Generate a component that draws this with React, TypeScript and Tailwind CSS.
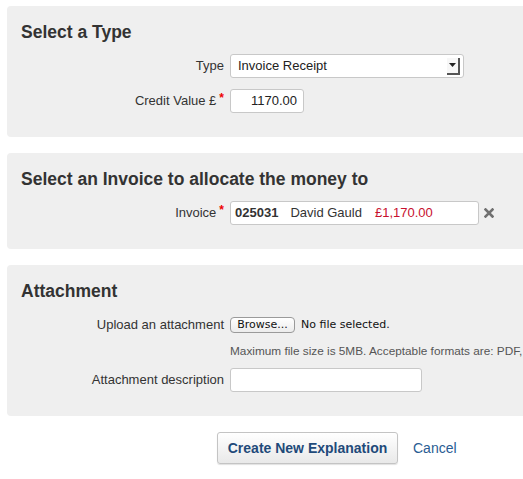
import React from "react";

const Req = () => <span className="text-[#e00] font-bold ml-[3px] relative -top-[3px] text-[12px]">*</span>;

function Row({ label, req, children, className = "" }: { label: string; req?: boolean; children: React.ReactNode; className?: string }) {
  return (
    <div className={"flex items-center " + className}>
      <div className="w-[209px] shrink-0 text-right pr-[6px] text-[13px] text-[#333] leading-[16px] whitespace-nowrap">
        {label}
        {req && <Req />}
      </div>
      {children}
    </div>
  );
}

function Panel({ title, children, className = "" }: { title: string; children: React.ReactNode; className?: string }) {
  return (
    <div className={"ml-[7px] w-[540px] bg-[#efefef] rounded-[4px] pl-[14px] pt-[16px] pb-[24px] " + className}>
      <h2 className="text-[17.5px] leading-[20px] font-bold text-[#333] mb-[12px]">{title}</h2>
      {children}
    </div>
  );
}

export default function App() {
  return (
    <div className="w-[523px] h-[479px] overflow-hidden bg-white pt-[6px]" style={{ fontFamily: '"Liberation Sans", Arial, sans-serif' }}>
      <Panel title="Select a Type">
        <Row label="Type">
          <div className="w-[234px] h-[24px] bg-white border border-[#c8c8c8] rounded-[3px] flex items-center pl-[7px] pr-[2px] text-[13px] text-[#222]">
            <span className="flex-1">Invoice Receipt</span>
            <div className="w-[13px] h-[17px] border-r-[2px] border-b-[2px] border-[#555] flex items-center justify-center mr-[1px] bg-[#f7f7f7]">
              <svg width="7" height="4" viewBox="0 0 7 4"><path d="M0 0h7L3.5 4z" fill="#222" /></svg>
            </div>
          </div>
        </Row>
        <Row label="Credit Value £" req className="mt-[11px]">
          <div className="w-[74px] h-[24px] bg-white border border-[#c8c8c8] rounded-[3px] flex items-center justify-end pr-[6px] text-[13px] text-[#222]">
            1170.00
          </div>
        </Row>
      </Panel>

      <Panel title="Select an Invoice to allocate the money to" className="mt-[16px]">
        <Row label="Invoice" req>
          <div className="w-[249px] h-[24px] bg-white border border-[#c8c8c8] rounded-[3px] flex items-center pl-[4px] text-[13px] text-[#333]">
            <span className="font-bold">025031</span>
            <span className="ml-[12px]">David Gauld</span>
            <span className="ml-[13px] text-[#c8102e]">£1,170.00</span>
          </div>
          <svg className="ml-[5px]" width="10" height="10" viewBox="0 0 10 10">
            <path d="M1.5 1.5l7 7M8.5 1.5l-7 7" stroke="#707070" strokeWidth="2.6" strokeLinecap="square" />
          </svg>
        </Row>
      </Panel>

      <Panel title="Attachment" className="mt-[16px]">
        <Row label="Upload an attachment" className="h-[24px]">
          <div className="flex items-center" style={{ fontFamily: '"DejaVu Sans", sans-serif' }}>
            <div className="w-[65px] h-[16px] border border-[#9a9a9a] rounded-[4px] bg-gradient-to-b from-white to-[#ececec] text-[11px] leading-[14px] text-[#111] text-center">
              Browse...
            </div>
            <span className="ml-[6px] text-[11px] text-[#111]">No file selected.</span>
          </div>
        </Row>
        <div className="mt-[6px] ml-[209px] text-[11.8px] leading-[16px] text-[#555] whitespace-nowrap">
          Maximum file size is 5MB. Acceptable formats are: PDF, JPG, PNG, GIF
        </div>
        <Row label="Attachment description" className="mt-[9px]">
          <div className="w-[192px] h-[24px] bg-white border border-[#c8c8c8] rounded-[3px]" />
        </Row>
      </Panel>

      <div className="flex items-center mt-[16px] ml-[217px]">
        <div className="w-[181px] h-[32px] border border-[#c4c4c4] rounded-[3px] bg-gradient-to-b from-white to-[#e9e9e9] shadow-[0_1px_1px_rgba(0,0,0,0.12)] flex items-center justify-center text-[14px] font-bold text-[#1f4a7a]">
          Create New Explanation
        </div>
        <span className="ml-[15px] text-[14px] text-[#2a5d93]">Cancel</span>
      </div>
    </div>
  );
}
